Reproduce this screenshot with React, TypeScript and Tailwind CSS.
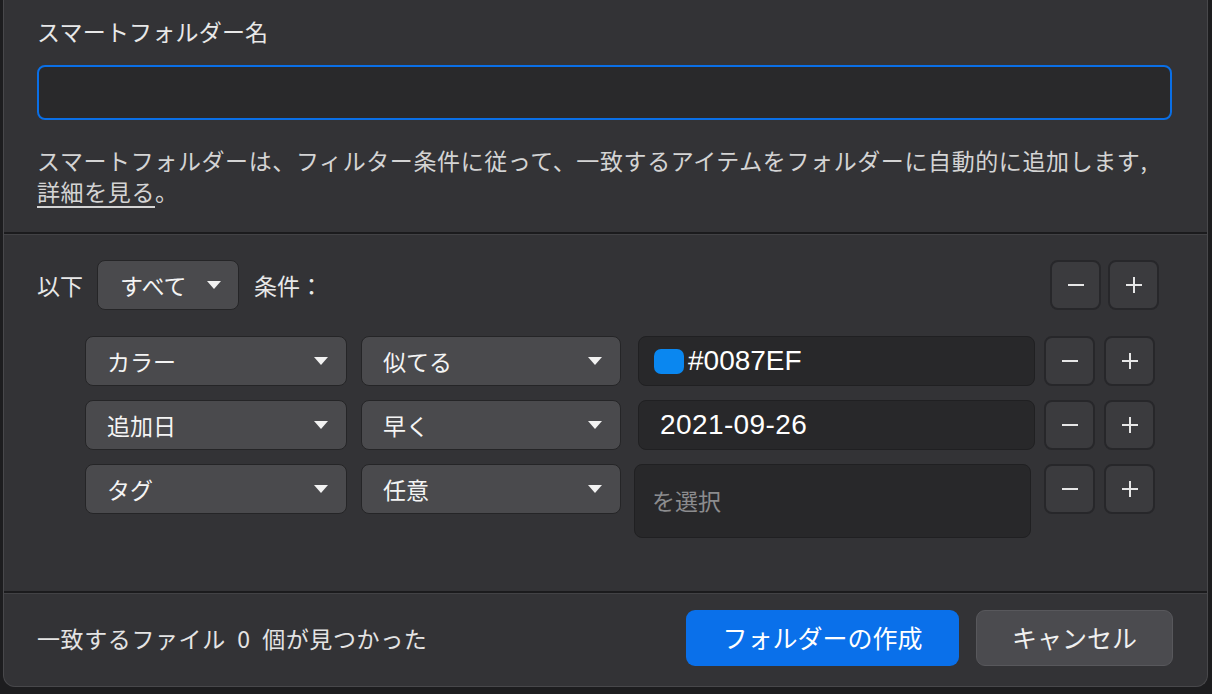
import React from 'react'

const jp = { fontFamily: '"Noto Sans CJK JP", "Noto Sans", sans-serif' }

function Caret() {
  return (
    <svg width="14" height="8" viewBox="0 0 14 8" className="shrink-0">
      <polygon points="0,0 14,0 7,8" fill="#f2f2f2" />
    </svg>
  )
}

function StepButton({ kind }: { kind: 'minus' | 'plus' }) {
  return (
    <button className="w-[51px] h-[50px] flex items-center justify-center rounded-[8px] bg-[#3b3b3e] border-2 border-[#27272a]">
      <svg width="18" height="18" viewBox="0 0 18 18">
        <line x1="1" y1="9" x2="17" y2="9" stroke="#e6e6e6" strokeWidth="2" />
        {kind === 'plus' && <line x1="9" y1="1" x2="9" y2="17" stroke="#e6e6e6" strokeWidth="2" />}
      </svg>
    </button>
  )
}

function Select({ label, width }: { label: string; width: string }) {
  return (
    <div
      className={`${width} h-[50px] shrink-0 flex items-center justify-between pl-[21px] pr-[18px] rounded-[8px] bg-[#4a4a4d] border border-[#252527] text-[23px] leading-none text-[#f4f4f4]`}
    >
      <span>{label}</span>
      <Caret />
    </div>
  )
}

export default function App() {
  return (
    <div className="w-[1212px] h-[694px] bg-[#1d1d1f] pl-[3px] pr-[4px] pb-[7px]" style={jp}>
      <div className="h-full flex flex-col bg-[#333336] border-x border-b border-[#48484b] rounded-b-[12px]">
        {/* name + description */}
        <div className="h-[232px] pl-[33px] pr-[35px] pt-[17px]">
          <div className="text-[23px] leading-[28px] tracking-[0.2px] text-[#e8e8e8]">スマートフォルダー名</div>
          <div className="mt-[20px] h-[55px] rounded-[8px] border-2 border-[#0a6fe6] bg-[#29292b]" />
          <p className="mt-[25px] text-[23px] leading-[31px] tracking-[0.6px] text-[#d4d4d4]">
            スマートフォルダーは、フィルター条件に従って、一致するアイテムをフォルダーに自動的に追加します,
            <br />
            <span className="underline underline-offset-[5px]">詳細を見る</span>。
          </p>
        </div>
        <div className="h-[2px] bg-[#1b1b1d]" />
        <div className="h-[1px] bg-[#424245]" />

        {/* conditions */}
        <div className="h-[356px] pl-[33px] pr-[48px] pt-[25px]">
          <div className="flex items-center h-[50px]">
            <span className="text-[23px] text-[#e8e8e8]">以下</span>
            <div className="ml-[14px] w-[142px] h-[50px] flex items-center justify-between pl-[22px] pr-[17px] rounded-[8px] bg-[#4a4a4d] border border-[#252527] text-[23px] leading-none text-[#f4f4f4]">
              <span>すべて</span>
              <Caret />
            </div>
            <span className="ml-[15px] text-[23px] text-[#e8e8e8]">条件：</span>
            <div className="ml-auto flex gap-[7px]">
              <StepButton kind="minus" />
              <StepButton kind="plus" />
            </div>
          </div>

          <div className="mt-[26px] pl-[48px] flex flex-col gap-[14px]">
            <div className="flex items-start">
              <Select label="カラー" width="w-[262px]" />
              <div className="ml-[14px]"><Select label="似てる" width="w-[260px]" /></div>
              <div className="ml-[17px] w-[397px] h-[50px] flex items-center pl-[15px] rounded-[8px] bg-[#28282a] border border-[#202022]">
                <span className="w-[30px] h-[25px] rounded-[7px] bg-[#0a87f0]" />
                <span className="ml-[4px] text-[28px] leading-none text-white" style={{ fontFamily: '"Liberation Sans", Arial, sans-serif' }}>#0087EF</span>
              </div>
              <div className="ml-[9px] flex gap-[9px]">
                <StepButton kind="minus" />
                <StepButton kind="plus" />
              </div>
            </div>
            <div className="flex items-start">
              <Select label="追加日" width="w-[262px]" />
              <div className="ml-[14px]"><Select label="早く" width="w-[260px]" /></div>
              <div className="ml-[17px] w-[397px] h-[50px] flex items-center pl-[21px] rounded-[8px] bg-[#28282a] border border-[#202022]">
                <span className="text-[28px] leading-none tracking-[0.4px] text-white" style={{ fontFamily: '"Liberation Sans", Arial, sans-serif' }}>2021-09-26</span>
              </div>
              <div className="ml-[9px] flex gap-[9px]">
                <StepButton kind="minus" />
                <StepButton kind="plus" />
              </div>
            </div>
            <div className="flex items-start">
              <Select label="タグ" width="w-[262px]" />
              <div className="ml-[14px]"><Select label="任意" width="w-[260px]" /></div>
              <div className="ml-[13px] w-[397px] h-[74px] flex items-center pl-[17px] pb-[2px] rounded-[8px] bg-[#28282a] border border-[#202022]">
                <span className="text-[23px] leading-none text-[#8c8c8e]">を選択</span>
              </div>
              <div className="ml-[13px] flex gap-[9px]">
                <StepButton kind="minus" />
                <StepButton kind="plus" />
              </div>
            </div>
          </div>
        </div>
        <div className="h-[2px] bg-[#1b1b1d]" />
        <div className="h-[1px] bg-[#424245]" />

        {/* footer */}
        <div className="flex-1 flex items-center pl-[33px] pr-[34px] pb-[4px]">
          <span className="text-[23px] tracking-[0.6px] text-[#e4e4e4]">一致するファイル&nbsp; 0&nbsp; 個が見つかった</span>
          <button className="ml-auto w-[273px] h-[56px] rounded-[9px] bg-[#0a70ea] text-[25px] text-white">
            フォルダーの作成
          </button>
          <button className="ml-[17px] w-[197px] h-[56px] rounded-[9px] bg-[#4b4b4f] border border-[#58585c] text-[25px] text-[#f0f0f0]">
            キャンセル
          </button>
        </div>
      </div>
    </div>
  )
}
